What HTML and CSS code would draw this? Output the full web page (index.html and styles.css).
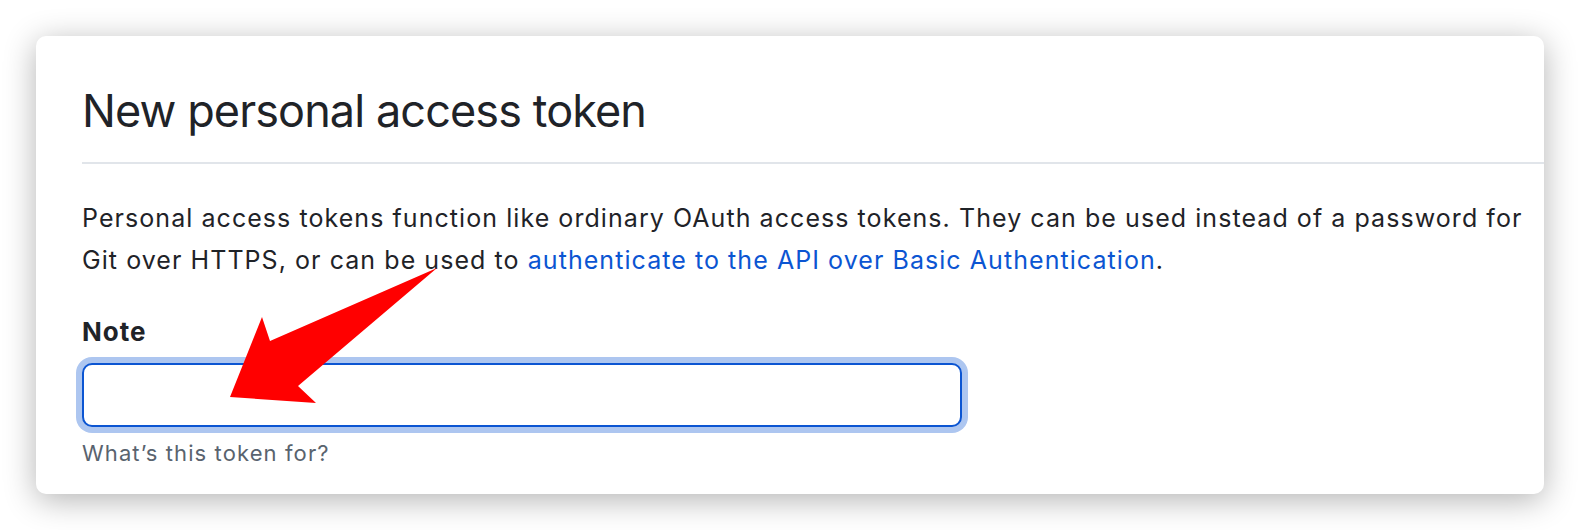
FILE: index.html
```html
<!DOCTYPE html>
<html lang="en">
<head>
<meta charset="utf-8">
<title>New personal access token</title>
<link rel="stylesheet" href="styles.css">
</head>
<body>
<div class="page">
  <div class="card">
    <div class="subhead">
      <h2 class="subhead-heading">New personal access token</h2>
    </div>
    <p class="intro">Personal access tokens function like ordinary OAuth access tokens. They can be used instead of a password for Git over HTTPS, or can be used to <a class="link" href="#">authenticate to the API over Basic Authentication</a>.</p>
    <div class="form-group">
      <label class="label" for="note">Note</label>
      <input class="input" id="note" type="text">
      <p class="note">What’s this token for?</p>
    </div>
  </div>
  <svg class="arrow" width="1580" height="530" viewBox="0 0 1580 530" aria-hidden="true">
    <polygon points="437,268 270,341 262,317 230,397 316,403 298,386" fill="#ff0000"/>
  </svg>
</div>
</body>
</html>
```

FILE: styles.css
```css
html, body {
  margin: 0;
  padding: 0;
  background: #ffffff;
}

.page {
  position: relative;
  width: 1580px;
  height: 530px;
  overflow: hidden;
  font-family: Inter, "Liberation Sans", sans-serif;
  color: #1f2328;
}

.card {
  box-sizing: border-box;
  margin: 36px 0 0 36px;
  width: 1508px;
  height: 458px;
  padding-left: 46px;
  background: #ffffff;
  border-radius: 10px;
  box-shadow: 0 6px 32px rgba(0, 0, 0, 0.3);
}

.subhead {
  padding-top: 47px;
  padding-bottom: 23px;
  border-bottom: 2px solid #e1e5ea;
}

.subhead-heading {
  margin: 0;
  font-size: 45px;
  font-weight: 400;
  line-height: 56px;
  letter-spacing: -0.9px;
}

.intro {
  margin: 33px 0 0 0;
  font-size: 25px;
  line-height: 42px;
  letter-spacing: 1.06px;
}

.link {
  color: #0b55d2;
  text-decoration: none;
}

.form-group {
  margin-top: 36px;
  display: flex;
  flex-direction: column;
  align-items: flex-start;
}

.label {
  font-size: 26px;
  font-weight: 700;
  line-height: 30px;
  letter-spacing: 1px;
}

.input {
  box-sizing: border-box;
  margin-top: 16px;
  width: 880px;
  height: 64px;
  border: 2px solid #0b55d2;
  border-radius: 10px;
  box-shadow: 0 0 0 6px #adc6f0;
  outline: none;
  background: #ffffff;
}

.note {
  margin: 12px 0 0 0;
  font-size: 22px;
  line-height: 28px;
  color: #59636e;
  letter-spacing: 1.1px;
}

.arrow {
  position: absolute;
  left: 0;
  top: 0;
  pointer-events: none;
}
```
